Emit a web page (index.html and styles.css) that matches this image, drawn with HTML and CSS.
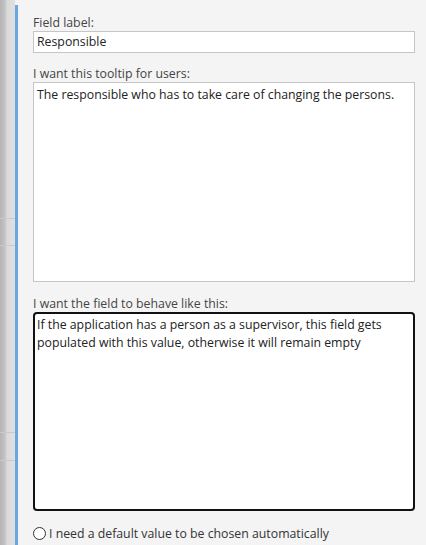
FILE: index.html
```html
<!DOCTYPE html>
<html>
<head>
<meta charset="utf-8">
<link rel="stylesheet" href="styles.css">
</head>
<body>
<div class="page">
  <div class="backdrop">
    <div class="bd-line l1"></div>
    <div class="bd-line l2"></div>
    <div class="bd-line l3"></div>
    <div class="bd-line l4"></div>
  </div>
  <div class="panel-wrap">
    <div class="panel">
      <div class="field">
        <div class="label">Field label:</div>
        <div class="input">Responsible</div>
      </div>
      <div class="field field-tall">
        <div class="label">I want this tooltip for users:</div>
        <div class="textarea">The responsible who has to take care of changing the persons.</div>
      </div>
      <div class="field">
        <div class="label">I want the field to behave like this:</div>
        <div class="textarea focused">If the application has a person as a supervisor, this field gets<br>populated with this value, otherwise it will remain empty</div>
      </div>
      <label class="radio-row">
        <span class="radio"></span>
        <span class="radio-text">I need a default value to be chosen automatically</span>
      </label>
    </div>
  </div>
</div>
</body>
</html>
```
FILE: styles.css
```css
html, body {
  margin: 0;
  padding: 0;
}
* {
  box-sizing: border-box;
}
body {
  width: 426px;
  height: 545px;
  overflow: hidden;
  background: #f4f4f4;
  font-family: "Open Sans", "Noto Sans", sans-serif;
  font-size: 12.3px;
  color: #333;
}
.page {
  display: flex;
  height: 545px;
}
.backdrop {
  width: 15px;
  flex: none;
  background: linear-gradient(to right, #b4b4b4 0, #c4c4c4 5px, #dadada 7px, #e0e0e0 15px);
  position: relative;
  overflow: hidden;
}
.bd-line {
  position: absolute;
  left: 0;
  width: 15px;
  height: 1px;
  background: #c9c9c9;
}
.l1 { top: 218px; }
.l2 { top: 245px; }
.l3 { top: 432px; }
.l4 { top: 460px; }
.panel-wrap {
  flex: 1;
  padding-top: 5px;
  display: flex;
}
.panel {
  flex: 1;
  border-left: 3px solid #6ba6e0;
  padding: 9px 11px 0 15px;
  display: flex;
  flex-direction: column;
}
.field {
  display: flex;
  flex-direction: column;
  margin-bottom: 12px;
}
.field-tall {
  margin-bottom: 13px;
}
.label {
  color: #444;
  line-height: 17px;
  margin-bottom: 0;
}
.input {
  height: 22px;
  border: 1px solid #c6c6c6;
  background: #fff;
  padding: 0 3px;
  line-height: 20px;
  color: #222;
}
.textarea {
  height: 200px;
  border: 1px solid #c6c6c6;
  background: #fff;
  padding: 3px 3px;
  line-height: 18px;
  color: #222;
}
.textarea.focused {
  border: 2px solid #111;
  border-radius: 4px;
  padding: 2px 2px;
  height: 199px;
}
.radio-row {
  display: flex;
  align-items: center;
  gap: 3px;
  margin-top: 2px;
}
.radio {
  width: 13px;
  height: 13px;
  border: 1px solid #333;
  border-radius: 50%;
  background: #fff;
}
.radio-text {
  color: #333;
}
```
